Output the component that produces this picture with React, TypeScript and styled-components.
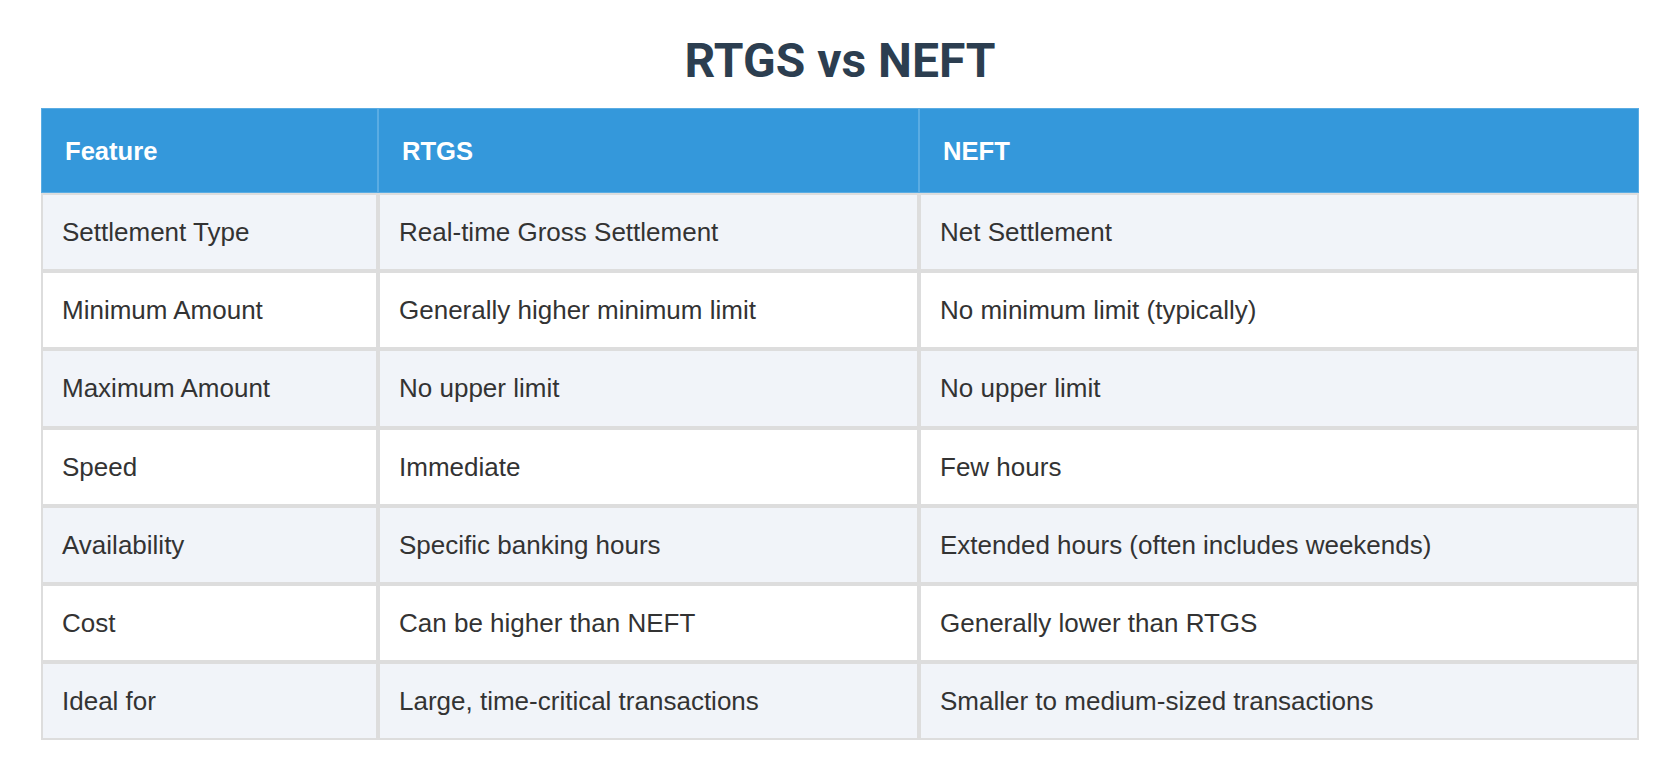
import React from "react";
import styled, { createGlobalStyle } from "styled-components";

const GlobalStyle = createGlobalStyle`
  html, body {
    margin: 0;
    padding: 0;
    background: #ffffff;
  }
  body {
    font-family: "Liberation Sans", Arial, sans-serif;
  }
`;

const Page = styled.div`
  padding: 32px 41px 40px;
  box-sizing: border-box;
  width: 1680px;
`;

const Title = styled.h1`
  margin: 0 0 18px;
  font-family: Roboto, "Liberation Sans", Arial, sans-serif;
  font-weight: 700;
  font-size: 48px;
  line-height: 58px;
  color: #2c3e50;
  text-align: center;
`;

const Table = styled.table`
  width: 100%;
  border-collapse: separate;
  border-spacing: 0;
  table-layout: fixed;
  font-family: "Liberation Sans", Arial, sans-serif;
  font-size: 26px;
`;

const Col = styled.col<{ $w?: number }>`
  width: ${(p) => (p.$w ? `${p.$w}px` : "auto")};
`;

const HeadCell = styled.th`
  background: #3498db;
  color: #ffffff;
  font-weight: 700;
  font-size: 25.6px;
  text-align: left;
  padding: 23.5px 23px;
  line-height: 36px;
  border: 1px solid #5aace3;
`;

const Row = styled.tr<{ $alt: boolean }>`
  background: ${(p) => (p.$alt ? "#f1f4f9" : "#ffffff")};
`;

const Cell = styled.td`
  padding: 19.1px 19px;
  line-height: 36px;
  color: #333333;
  border: 2px solid #dddddd;
  white-space: nowrap;
`;

const rows: [string, string, string][] = [
  ["Settlement Type", "Real-time Gross Settlement", "Net Settlement"],
  ["Minimum Amount", "Generally higher minimum limit", "No minimum limit (typically)"],
  ["Maximum Amount", "No upper limit", "No upper limit"],
  ["Speed", "Immediate", "Few hours"],
  ["Availability", "Specific banking hours", "Extended hours (often includes weekends)"],
  ["Cost", "Can be higher than NEFT", "Generally lower than RTGS"],
  ["Ideal for", "Large, time-critical transactions", "Smaller to medium-sized transactions"],
];

export default function App() {
  return (
    <>
      <GlobalStyle />
      <Page>
        <Title>RTGS vs NEFT</Title>
        <Table>
          <colgroup>
            <Col $w={337} />
            <Col $w={541} />
            <Col />
          </colgroup>
          <thead>
            <tr>
              <HeadCell>Feature</HeadCell>
              <HeadCell>RTGS</HeadCell>
              <HeadCell>NEFT</HeadCell>
            </tr>
          </thead>
          <tbody>
            {rows.map((r, i) => (
              <Row key={r[0]} $alt={i % 2 === 0}>
                <Cell>{r[0]}</Cell>
                <Cell>{r[1]}</Cell>
                <Cell>{r[2]}</Cell>
              </Row>
            ))}
          </tbody>
        </Table>
      </Page>
    </>
  );
}
